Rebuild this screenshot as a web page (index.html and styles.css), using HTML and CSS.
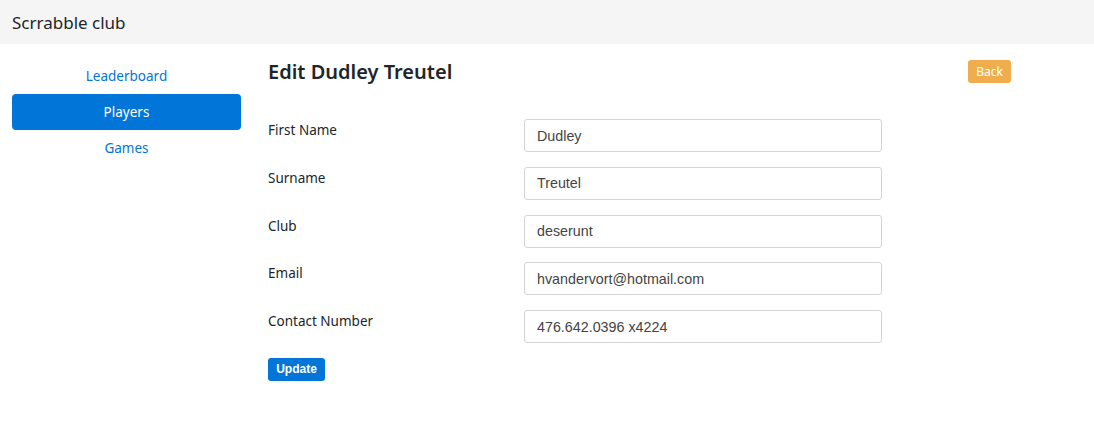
FILE: index.html
```html
<!DOCTYPE html>
<html>
<head>
<meta charset="utf-8">
<link rel="stylesheet" href="styles.css">
</head>
<body>
<header class="topbar"><span class="brand">Scrrabble club</span></header>
<div class="layout">
  <nav class="sidebar">
    <a class="nav-link" href="#">Leaderboard</a>
    <a class="nav-link active" href="#">Players</a>
    <a class="nav-link" href="#">Games</a>
  </nav>
  <main class="main">
    <div class="title-row">
      <h1 class="title">Edit Dudley Treutel</h1>
      <button class="btn btn-back">Back</button>
    </div>
    <form class="form">
      <div class="row"><label class="label">First Name</label><input class="input" value="Dudley"></div>
      <div class="row"><label class="label">Surname</label><input class="input" value="Treutel"></div>
      <div class="row"><label class="label">Club</label><input class="input" value="deserunt"></div>
      <div class="row"><label class="label">Email</label><input class="input" value="hvandervort@hotmail.com"></div>
      <div class="row"><label class="label">Contact Number</label><input class="input" value="476.642.0396 x4224"></div>
      <button type="button" class="btn btn-update">Update</button>
    </form>
  </main>
</div>
</body>
</html>
```

FILE: styles.css
```css
* { box-sizing: border-box; }
html, body { margin: 0; padding: 0; background: #fff; }
body { font-family: "Noto Sans", "Open Sans", sans-serif; color: #212529; }

.topbar {
  height: 44px;
  background: #f5f5f5;
  display: flex;
  align-items: center;
  padding-left: 12px;
}
.brand { font-size: 17px; color: #212529; }

.layout {
  display: flex;
  padding-top: 14px;
}
.sidebar {
  width: 253px;
  padding: 0 12px;
  display: flex;
  flex-direction: column;
  flex-shrink: 0;
}
.nav-link {
  display: block;
  height: 36px;
  line-height: 36px;
  text-align: center;
  font-size: 13.5px;
  color: #0275d8;
  text-decoration: none;
  border-radius: 4px;
}
.nav-link.active { background: #0275d8; color: #fff; }

.main {
  margin-left: 15px;
  width: 743px;
}
.title-row {
  display: flex;
  justify-content: space-between;
  align-items: flex-start;
  height: 29px;
}
.title {
  margin: 0;
  font-size: 20px;
  font-weight: 600;
  line-height: 28px;
  color: #212529;
}
.btn {
  border: none;
  border-radius: 3px;
  color: #fff;
  cursor: pointer;
}
.btn-back {
  margin-top: 2px;
  width: 43px;
  height: 23px;
  padding: 0;
  background: #f0ad4e;
  font-family: "Noto Sans", sans-serif;
  font-size: 12px;
}
.form { margin-top: 32px; }
.row {
  display: flex;
  align-items: flex-start;
  margin-bottom: 14.75px;
}
.label {
  width: 256px;
  font-size: 13.5px;
  line-height: 22px;
  color: #212529;
}
.input {
  width: 358px;
  height: 33px;
  border: 1px solid #d4d4d4;
  border-radius: 3px;
  padding: 0 12px;
  font-family: "Liberation Sans", Arial, sans-serif;
  font-size: 14.3px;
  color: #444;
  outline: none;
}
.btn-update {
  display: block;
  width: 57px;
  height: 23px;
  padding: 0;
  background: #0275d8;
  font-family: "Liberation Sans", Arial, sans-serif;
  font-weight: bold;
  font-size: 12px;
}
```
